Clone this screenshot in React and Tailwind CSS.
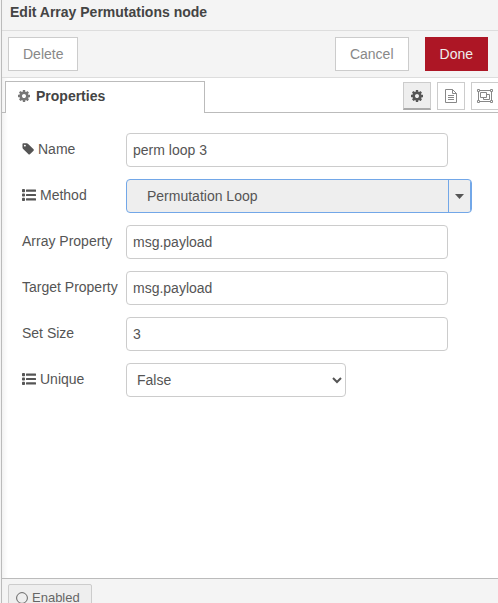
import React from "react";

function CogIcon({ className }) {
  return (
    <svg viewBox="128 128 1536 1536" fill="currentColor" className={className} aria-hidden="true">
      <path d="M1152 896q0-106-75-181t-181-75-181 75-75 181 75 181 181 75 181-75 75-181zm512-109v222q0 12-8 23t-20 13l-185 28q-19 54-39 91 35 50 107 138 10 12 10 25t-9 23q-27 37-99 108t-94 71q-12 0-26-9l-138-108q-44 23-91 38-16 136-29 186-7 28-36 28h-222q-14 0-24.5-8.5t-11.5-21.5l-28-184q-49-16-90-37l-141 107q-10 9-25 9-14 0-25-11-126-114-165-168-7-10-7-23 0-12 8-23 15-21 51-66.5t54-70.5q-27-50-41-99l-183-27q-13-2-21-12.5t-8-23.5v-222q0-12 8-23t19-13l186-28q14-46 39-92-40-57-107-138-10-12-10-24 0-10 9-23 26-36 98.5-107.5t94.5-71.5q13 0 26 10l138 107q44-23 91-38 16-136 29-186 7-28 36-28h222q14 0 24.5 8.5t11.5 21.5l28 184q49 16 90 37l142-107q9-9 24-9 13 0 25 10 129 119 165 170 7 8 7 22 0 12-8 23-15 21-51 66.5t-54 70.5q26 50 41 98l183 28q13 2 21 12.5t8 23.5z" />
    </svg>
  );
}

function TagIcon() {
  return (
    <svg viewBox="64 128 1600 1536" fill="currentColor" className="h-3 w-3" aria-hidden="true">
      <path d="M576 448q0-53-37.5-90.5t-90.5-37.5-90.5 37.5-37.5 90.5 37.5 90.5 90.5 37.5 90.5-37.5 37.5-90.5zm1067 576q0 53-37 90l-491 492q-39 37-91 37-53 0-90-37l-715-716q-38-37-64.5-101t-26.5-117v-416q0-52 38-90t90-38h416q53 0 117 26.5t102 64.5l715 714q37 39 37 91z" />
    </svg>
  );
}

function ListIcon() {
  return (
    <svg viewBox="0 0 14 14" fill="currentColor" className="h-3.5 w-3.5" aria-hidden="true">
      <rect x="0" y="1" width="3" height="3.2" rx="0.8" />
      <rect x="0" y="5.4" width="3" height="3.2" rx="0.8" />
      <rect x="0" y="9.8" width="3" height="3.2" rx="0.8" />
      <rect x="4" y="1.5" width="10" height="2.2" rx="0.25" />
      <rect x="4" y="5.9" width="10" height="2.2" rx="0.25" />
      <rect x="4" y="10.3" width="10" height="2.2" rx="0.25" />
    </svg>
  );
}

function FileIcon() {
  return (
    <svg viewBox="0 0 12 14" fill="none" stroke="currentColor" className="h-3.5 w-3" aria-hidden="true">
      <path d="M.5.5h7l4 4v9H.5zM7.5.5v4h4M3 6.5h6M3 8.5h6M3 10.5h6" />
    </svg>
  );
}

function GroupIcon() {
  return (
    <svg viewBox="0 0 16 14" fill="none" stroke="currentColor" className="h-3.5 w-4 shrink-0" aria-hidden="true">
      <path d="M3 1.5h10M3 12.5h10M1.5 3v8M14.5 3v8" />
      <path d="M.5.5h2v2h-2zM13.5.5h2v2h-2zM.5 11.5h2v2h-2zM13.5 11.5h2v2h-2z" />
      <path d="M3.5 3.5h6v5h-6zM9.5 5.5h3v5h-6v-2" />
    </svg>
  );
}

function Row({ id, label, icon, wide, children }) {
  return (
    <div className={`grid grid-cols-[104px_1fr] ${wide ? "pr-[26px]" : "pr-[50px]"}`}>
      <label htmlFor={id} className="flex h-8 items-center gap-1 whitespace-nowrap">
        {icon}
        {label}
      </label>
      {children}
    </div>
  );
}

const field = "h-[34px] w-full rounded border border-[#ccc] bg-white text-[#555] outline-none";
const action = "h-[34px] border border-[#ccc] bg-white px-3.5 text-[#888]";
const tool = "flex h-7 w-7 shrink-0 items-center justify-center border";

export default function App() {
  return (
    <div className="flex h-screen overflow-hidden bg-[#f3f3f3] pl-px font-['Liberation_Sans',Arial,sans-serif] text-sm text-[#555]">
      <div className="flex min-w-0 flex-1 flex-col border-l border-[#bbb] bg-white bg-linear-to-r from-black/5 to-transparent to-[6px]">
        <h1 className="h-[31px] border-b border-[#ddd] bg-[#f3f3f3]/90 pt-0.5 pl-2 leading-5 font-bold text-[#444]">
          Edit Array Permutations node
        </h1>

        <div className="flex h-[47px] items-center border-b border-[#ddd] bg-[#f3f3f3]/90 pr-2.5 pl-1.5">
          <button type="button" className={action}>Delete</button>
          <div className="ml-auto flex gap-4">
            <button type="button" className={action}>Cancel</button>
            <button type="button" className="h-[34px] border border-[#ad1625] bg-[#ad1625] px-3.5 text-[#eee]">
              Done
            </button>
          </div>
        </div>

        <div className="flex h-[35px] items-end overflow-hidden">
          <div className="w-[3px] self-stretch border-b border-[#bbb]" />
          <button
            type="button"
            className="flex h-8 w-[200px] items-center gap-1.5 border border-b-0 border-[#bbb] bg-white pb-1 pl-3 font-bold text-[#444]"
          >
            <CogIcon className="h-3 w-3 text-[#777]" />
            Properties
          </button>
          <div className="flex min-w-0 flex-1 justify-end gap-1.5 self-stretch border-b border-[#bbb] pt-1">
            <button type="button" aria-label="Settings" className={`${tool} border-[#ccc] border-b-2 border-b-[#aaa] bg-[#eee] text-[#555]`}>
              <CogIcon className="h-3 w-3" />
            </button>
            <button type="button" aria-label="Description" className={`${tool} border-[#ccc] text-[#888]`}>
              <FileIcon />
            </button>
            <button type="button" aria-label="Appearance" className={`${tool} -mr-px border-[#ccc] text-[#888]`}>
              <GroupIcon />
            </button>
          </div>
        </div>

        <form className="flex flex-1 flex-col gap-3 pt-5 pl-5">
          <Row id="name" label="Name" icon={<TagIcon />}>
            <input id="name" type="text" defaultValue="perm loop 3" className={`${field} px-1.5`} />
          </Row>
          <Row id="method" label="Method" icon={<ListIcon />} wide>
            <button
              id="method"
              type="button"
              className="flex h-[34px] w-full items-stretch overflow-hidden rounded border border-[#72a7e8] bg-[#eee] pl-5 text-left text-[#555]"
            >
              <span className="flex flex-1 items-center">Permutation Loop</span>
              <span className="flex w-[23px] items-center justify-center border-r border-l border-[#72a7e8]">
                <svg viewBox="0 0 9 5" className="h-[5px] w-[9px]" fill="currentColor" aria-hidden="true">
                  <path d="M0 0h9L4.5 5z" />
                </svg>
              </span>
            </button>
          </Row>
          <Row id="array" label="Array Property">
            <input id="array" type="text" defaultValue="msg.payload" className={`${field} px-1.5`} />
          </Row>
          <Row id="target" label="Target Property">
            <input id="target" type="text" defaultValue="msg.payload" className={`${field} px-1.5`} />
          </Row>
          <Row id="size" label="Set Size">
            <input id="size" type="text" defaultValue="3" className={`${field} px-1.5`} />
          </Row>
          <Row id="unique" label="Unique" icon={<ListIcon />}>
            <select id="unique" defaultValue="False" className={`${field} max-w-[220px] pl-1.5`}>
              <option>False</option>
              <option>True</option>
            </select>
          </Row>
        </form>

        <footer className="h-[25px] overflow-hidden border-t border-[#bbb] bg-[#f3f3f3]/90 pt-[5px] pl-1.5">
          <button
            type="button"
            className="flex h-7 w-[84px] items-center gap-1 rounded-xs border border-[#ccc] bg-[#eee] pl-[7px] text-[13px] text-[#666]"
          >
            <svg viewBox="0 0 12 12" className="h-3 w-3" fill="none" stroke="currentColor" aria-hidden="true">
              <circle cx="6" cy="6" r="5.4" />
            </svg>
            Enabled
          </button>
        </footer>
      </div>
    </div>
  );
}
